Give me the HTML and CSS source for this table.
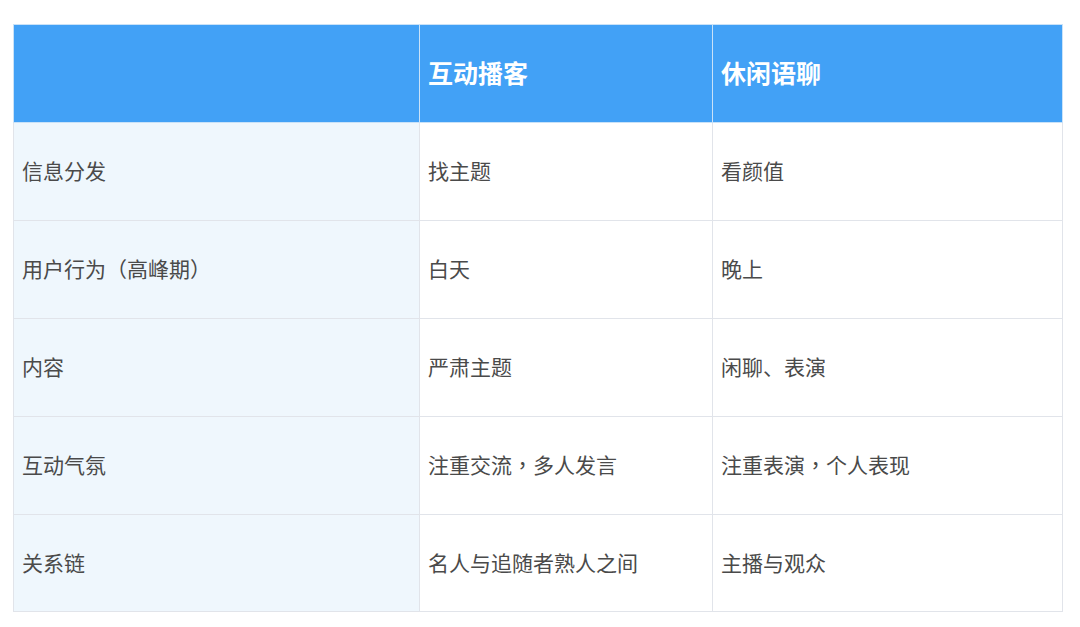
FILE: index.html
```html
<!DOCTYPE html>
<html lang="zh-CN">
<head>
<meta charset="utf-8">
<link rel="stylesheet" href="styles.css">
</head>
<body>
<div class="wrap">
<table class="cmp">
<colgroup><col class="c1"><col class="c2"><col class="c3"></colgroup>
<thead>
<tr><th></th><th>互动播客</th><th>休闲语聊</th></tr>
</thead>
<tbody>
<tr><td class="lab">信息分发</td><td>找主题</td><td>看颜值</td></tr>
<tr><td class="lab">用户行为<span class="p" lang="zh-TW">（</span>高峰期<span class="p" lang="zh-TW">）</span></td><td>白天</td><td>晚上</td></tr>
<tr><td class="lab">内容</td><td>严肃主题</td><td>闲聊、表演</td></tr>
<tr><td class="lab">互动气氛</td><td>注重交流<span class="p" lang="zh-TW">，</span>多人发言</td><td>注重表演<span class="p" lang="zh-TW">，</span>个人表现</td></tr>
<tr class="last"><td class="lab">关系链</td><td>名人与追随者熟人之间</td><td>主播与观众</td></tr>
</tbody>
</table>
</div>
</body>
</html>
```
FILE: styles.css
```css
html, body { margin: 0; padding: 0; background: #fff; }
.wrap { padding: 24px 0 0 13px; }
.cmp {
  border-collapse: collapse;
  table-layout: fixed;
  width: 1049px;
  font-family: "Noto Sans CJK SC", "Noto Sans", sans-serif;
}
.c1 { width: 406px; }
.c2 { width: 293px; }
.c3 { width: 350px; }
.cmp th, .cmp td {
  border: 1px solid #e1e4ea;
  text-align: left;
  vertical-align: middle;
  padding: 0 0 3px 8px;
}
.cmp th {
  height: 94px;
  background: #42a1f6;
  color: #fff;
  font-size: 25px;
  font-weight: 700;
  border-color: #c9e2f8;
}
.cmp td {
  height: 94px;
  color: #4a4a4a;
  font-size: 21px;
  font-weight: 400;
  background: #fff;
}
.cmp tr.last td { height: 93px; }
.cmp td.lab { background: #eff7fd; }
.p { font-family: "Noto Sans CJK TC", "Noto Sans CJK SC", sans-serif; }
```
